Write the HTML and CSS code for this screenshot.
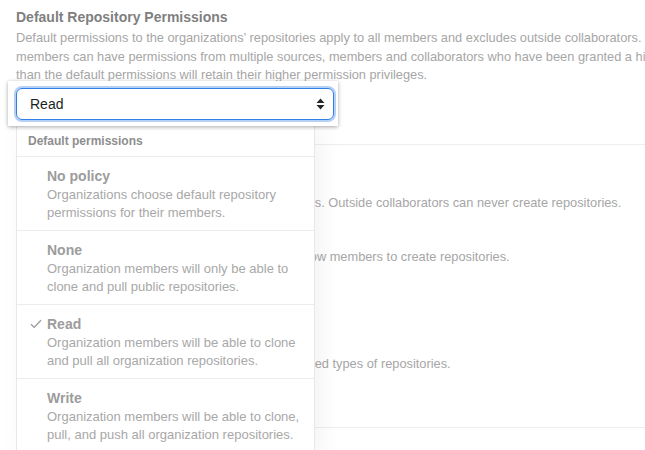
FILE: index.html
```html
<!DOCTYPE html>
<html>
<head>
<meta charset="utf-8">
<link rel="stylesheet" href="styles.css">
</head>
<body>
<div class="page">
  <h2 class="title">Default Repository Permissions</h2>
  <p class="desc">
    <span class="line">Default permissions to the organizations’ repositories apply to all members and excludes outside collaborators. Since organization</span>
    <span class="line">members can have permissions from multiple sources, members and collaborators who have been granted a higher level of access</span>
    <span class="line">than the default permissions will retain their higher permission privileges.</span>
  </p>

  <div class="select-panel">
    <div class="select">
      <span class="select-value">Read</span>
      <svg class="select-arrows" width="9" height="12" viewBox="0 0 9 12"><path d="M4.5 0.5 L8.5 5 L0.5 5 Z M4.5 11.5 L8.5 7 L0.5 7 Z" fill="#24292e"/></svg>
    </div>
  </div>

  <div class="section">
    <h3 class="sec-title">Creation</h3>
    <p class="note">Members will be able to create only these repositories. Outside collaborators can never create repositories.</p>
    <p class="note note-2">Disabling both of these repository options will not allow members to create repositories.</p>
    <p class="note note-3">Organization members might then create only specified types of repositories.</p>
  </div>

  <div class="menu">
    <div class="menu-header">Default permissions</div>
    <div class="menu-item">
      <div class="item-title">No policy</div>
      <div class="item-desc">Organizations choose default repository permissions for their members.</div>
    </div>
    <div class="menu-item">
      <div class="item-title">None</div>
      <div class="item-desc">Organization members will only be able to clone and pull public repositories.</div>
    </div>
    <div class="menu-item">
      <svg class="check" width="12" height="10" viewBox="0 0 12 10"><path d="M1 5.2 L4.2 8.4 L11 1.2" fill="none" stroke="#9a9a9a" stroke-width="1.3"/></svg>
      <div class="item-title">Read</div>
      <div class="item-desc">Organization members will be able to clone and pull all organization repositories.</div>
    </div>
    <div class="menu-item">
      <div class="item-title">Write</div>
      <div class="item-desc">Organization members will be able to clone, pull, and push all organization repositories.</div>
    </div>
  </div>
</div>
</body>
</html>
```

FILE: styles.css
```css
html, body {
  margin: 0;
  padding: 0;
  background: #ffffff;
  overflow: hidden;
  width: 645px;
  height: 450px;
}

.page {
  position: relative;
  padding: 0 16px;
  font-family: "Liberation Sans", Arial, sans-serif;
}

.title {
  margin: 0;
  padding-top: 7px;
  font-size: 14px;
  line-height: 20px;
  font-weight: bold;
  color: #7f7f7f;
}

.desc {
  margin: 2px 0 0 0;
  font-size: 12.8px;
  line-height: 18.5px;
  color: #a6a6a6;
  white-space: nowrap;
}

.line {
  display: block;
}

.select-panel {
  margin: -4px 0 0 -8px;
  width: 330px;
  box-sizing: border-box;
  padding: 7px 4px 6px 8px;
  background: #ffffff;
  box-shadow: 0 1px 4px rgba(0, 0, 0, 0.35);
  position: relative;
  z-index: 2;
}

.select {
  height: 32px;
  box-sizing: border-box;
  border: 1px solid #2f7fe6;
  border-radius: 6px;
  box-shadow: 0 0 0 2px rgba(120, 170, 240, 0.55);
  display: flex;
  align-items: center;
  justify-content: space-between;
  padding: 0 8px 0 13px;
  width: 318px;
}

.select-value {
  font-size: 14px;
  color: #1b1f23;
}

.select-arrows {
  display: block;
}

.section {
  border-top: 1px solid #eeeeee;
  margin: 18px -16px 0 0;
  border-bottom: 1px solid #eeeeee;
}

.sec-title {
  margin: 16px 0 0 0;
  font-size: 14px;
  line-height: 20px;
  color: #7f7f7f;
}

.note {
  margin: 13px 0 0 0;
  font-size: 12.8px;
  line-height: 18px;
  color: #a6a6a6;
  white-space: nowrap;
}

.note-2 {
  margin-top: 36px;
}

.note-3 {
  margin-top: 89px;
  margin-bottom: 54px;
}

.menu {
  position: absolute;
  left: 16px;
  top: 124px;
  width: 299px;
  box-sizing: border-box;
  background: #ffffff;
  border: 1px solid #e8e8e8;
  box-shadow: 6px 4px 22px rgba(0, 0, 0, 0.05);
  z-index: 1;
}

.menu-header {
  height: 31px;
  box-sizing: border-box;
  padding: 7px 0 0 11px;
  font-size: 12px;
  line-height: 18px;
  font-weight: bold;
  color: #8e8e8e;
}

.menu-item {
  position: relative;
  border-top: 1px solid #ececec;
  padding: 9px 12px 8px 30px;
}

.item-title {
  font-size: 14px;
  line-height: 20px;
  font-weight: bold;
  color: #9c9c9c;
}

.item-desc {
  font-size: 13px;
  line-height: 18px;
  color: #a8a8a8;
}

.check {
  position: absolute;
  left: 13px;
  top: 14px;
}
```
